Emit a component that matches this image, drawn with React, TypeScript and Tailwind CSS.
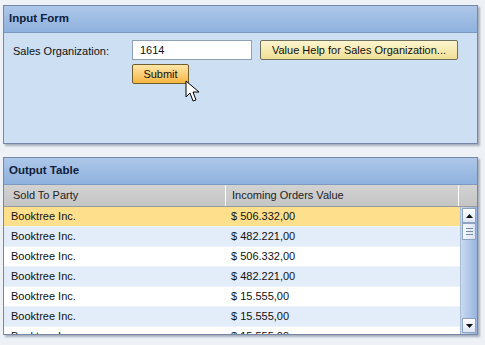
import React from 'react';

const rows = [
  { party: 'Booktree Inc.', value: '$ 506.332,00' },
  { party: 'Booktree Inc.', value: '$ 482.221,00' },
  { party: 'Booktree Inc.', value: '$ 506.332,00' },
  { party: 'Booktree Inc.', value: '$ 482.221,00' },
  { party: 'Booktree Inc.', value: '$ 15.555,00' },
  { party: 'Booktree Inc.', value: '$ 15.555,00' },
  { party: 'Booktree Inc.', value: '$ 15.555,00' },
];

function PanelHeader({ title }: { title: string }) {
  return (
    <div className="h-[27px] flex items-center px-[5px] bg-gradient-to-b from-[#adc7e8] to-[#8fb1de] border-b border-[#7d99c0] text-[11.5px] font-bold text-[#10203a]">
      {title}
    </div>
  );
}

function Cursor() {
  return (
    <svg className="absolute left-[181px] top-[74px]" width="16" height="23" viewBox="0 0 16 23">
      <path d="M1 1 L1 17 L5 13 L8 21 L11 20 L8 12 L14 12 Z" fill="#fff" stroke="#000" strokeWidth="1" strokeLinejoin="round" />
    </svg>
  );
}

export default function App() {
  return (
    <div className="w-[485px] h-[345px] bg-[#eef2f7] pt-[5px] pl-[3px] overflow-hidden" style={{ fontFamily: '"Liberation Sans", Arial, sans-serif' }}>
      {/* Input Form */}
      <div className="relative w-[475px] h-[139px] border border-[#7488a6] bg-[#cddff3] shadow-[2px_2px_2px_rgba(80,90,110,0.45)]">
        <PanelHeader title="Input Form" />
        <div className="flex pl-[9px] pt-[7px]">
          <div className="w-[119px] pt-[3px] text-[11px] text-[#111]">Sales Organization:</div>
          <div className="flex flex-col gap-[4px]">
            <div className="flex gap-[8px]">
              <div className="w-[120px] h-[20px] bg-white border border-[#8f9fb5] flex items-center px-[7px] text-[11px] text-[#111]">1614</div>
              <div className="w-[198px] h-[20px] border border-[#6e6f5e] rounded-[2px] bg-gradient-to-b from-[#fdf6cf] to-[#efdf94] flex items-center justify-center text-[11px] text-[#111]">
                Value Help for Sales Organization...
              </div>
            </div>
            <div className="w-[57px] h-[20px] border border-[#6f5d2c] rounded-[2px] bg-gradient-to-b from-[#fde7a6] to-[#f6b53e] flex items-center justify-center text-[11px] text-[#111]">
              Submit
            </div>
          </div>
        </div>
        <Cursor />
      </div>

      {/* Output Table */}
      <div className="mt-[13px] w-[475px] h-[178px] border border-[#7488a6] bg-white shadow-[2px_2px_2px_rgba(80,90,110,0.45)] flex flex-col overflow-hidden">
        <PanelHeader title="Output Table" />
        <div className="h-[22px] flex bg-gradient-to-b from-[#d2d2d2] to-[#c5c5c5] border-b border-[#9a9a9a] text-[11px] text-[#222]">
          <div className="w-[222px] border-r border-white flex items-center pl-[9px]">Sold To Party</div>
          <div className="w-[233px] border-r border-white flex items-center pl-[6px]">Incoming Orders Value</div>
          <div className="flex-1" />
        </div>
        <div className="flex flex-1 overflow-hidden">
          <div className="w-[456px] flex flex-col">
            {rows.map((r, i) => (
              <div
                key={i}
                className={`h-[20px] shrink-0 flex items-center text-[11px] text-[#111] border-b border-[#eef3f9] ${
                  i === 0 ? 'bg-[#fedf8c]' : i % 2 === 1 ? 'bg-[#e2edf9]' : 'bg-white'
                }`}
              >
                <div className="w-[223px] pl-[7px]">{r.party}</div>
                <div className="pl-[4px]">{r.value}</div>
              </div>
            ))}
          </div>
          <div className="w-[17px] flex flex-col bg-gradient-to-r from-[#c9daf0] to-[#97b5df] border-l border-[#a9bcd6]">
            <div className="h-[15px] mx-[1px] mt-[1px] border border-[#8ea3c2] bg-gradient-to-b from-white to-[#dde7f4] flex items-center justify-center">
              <svg width="7" height="4" viewBox="0 0 7 4"><path d="M3.5 0 L7 4 L0 4 Z" fill="#111" /></svg>
            </div>
            <div className="h-[17px] mx-[1px] border border-[#8ea3c2] bg-gradient-to-r from-[#f4f8fd] to-[#d8e4f3] flex flex-col items-center justify-center gap-[2px]">
              <div className="w-[7px] h-px bg-[#7c8ca4]" />
              <div className="w-[7px] h-px bg-[#7c8ca4]" />
              <div className="w-[7px] h-px bg-[#7c8ca4]" />
            </div>
            <div className="flex-1" />
            <div className="h-[15px] mx-[1px] mb-[1px] border border-[#8ea3c2] bg-gradient-to-b from-white to-[#dde7f4] flex items-center justify-center">
              <svg width="7" height="4" viewBox="0 0 7 4"><path d="M0 0 L7 0 L3.5 4 Z" fill="#111" /></svg>
            </div>
          </div>
        </div>
      </div>
    </div>
  );
}
